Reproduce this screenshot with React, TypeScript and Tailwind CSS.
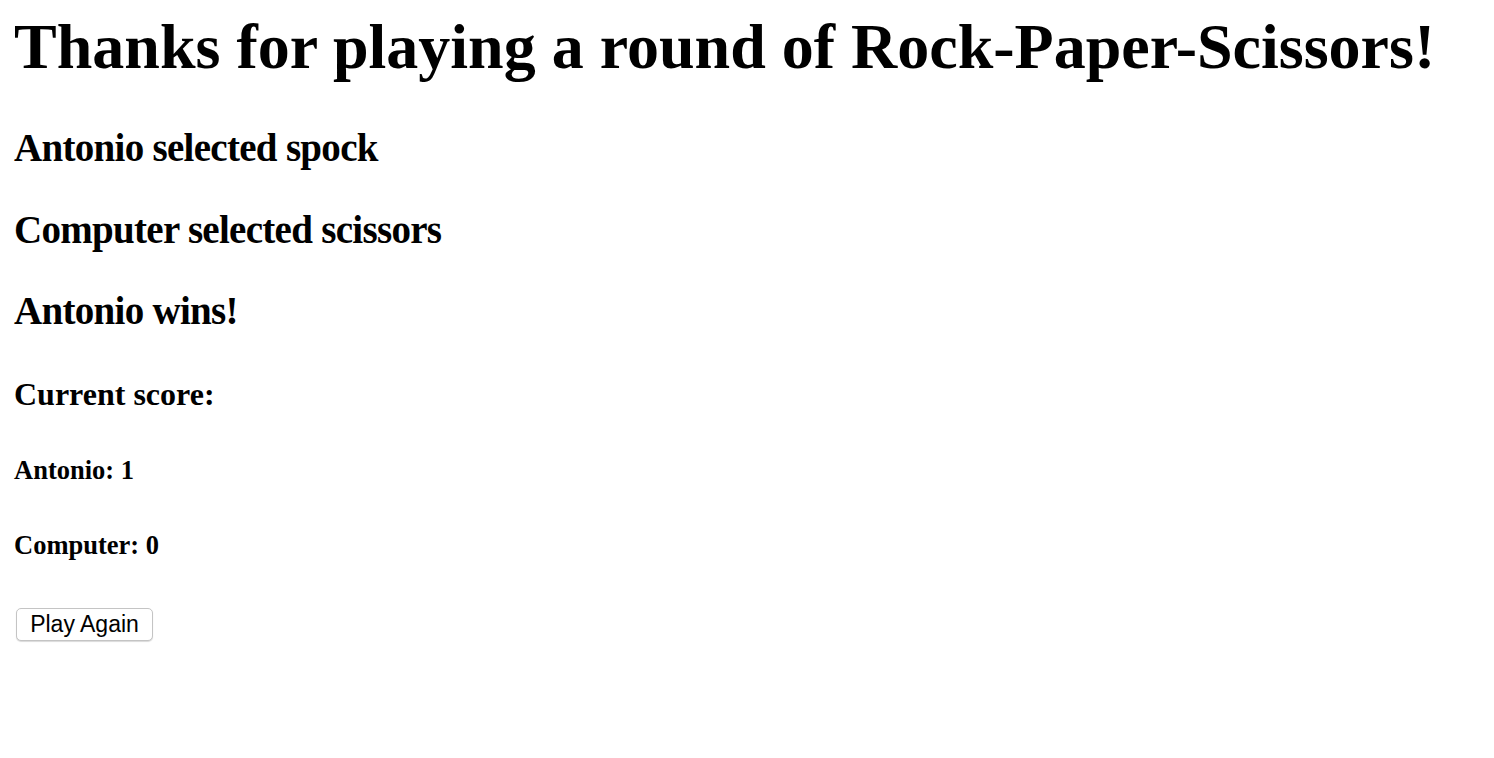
export default function App() {
  const rows = [
    "Antonio selected spock",
    "Computer selected scissors",
    "Antonio wins!",
  ];

  return (
    <div className="min-h-screen bg-white px-[14px] text-black font-['Liberation_Serif','Times_New_Roman',serif]">
      <h1 className="mt-[9px] text-[64px] font-bold leading-[76px] whitespace-nowrap">
        Thanks for playing a round of Rock-Paper-Scissors!
      </h1>

      <h2 className="mt-[39px] text-[39px] font-bold leading-[47px] tracking-[-0.7px]">{rows[0]}</h2>
      <h2 className="mt-[35px] text-[39px] font-bold leading-[47px] tracking-[-0.7px]">{rows[1]}</h2>
      <h2 className="mt-[34px] text-[39px] font-bold leading-[47px] tracking-[-0.7px]">{rows[2]}</h2>

      <h3 className="mt-[42px] text-[32px] font-bold leading-[36px]">Current score:</h3>
      <h4 className="mt-[43px] text-[26.5px] font-bold leading-[31px]">Antonio: 1</h4>
      <h4 className="mt-[44px] text-[26.5px] font-bold leading-[31px]">Computer: 0</h4>

      <button
        type="button"
        className="mt-[47px] ml-[2px] flex h-[33px] w-[137px] items-center justify-center rounded-[5px] border border-[#c4c4c4] bg-white text-[23px] leading-none text-black shadow-[0_1px_1px_rgba(0,0,0,0.15)] font-['Liberation_Sans','Helvetica',sans-serif]"
      >
        Play Again
      </button>
    </div>
  );
}
